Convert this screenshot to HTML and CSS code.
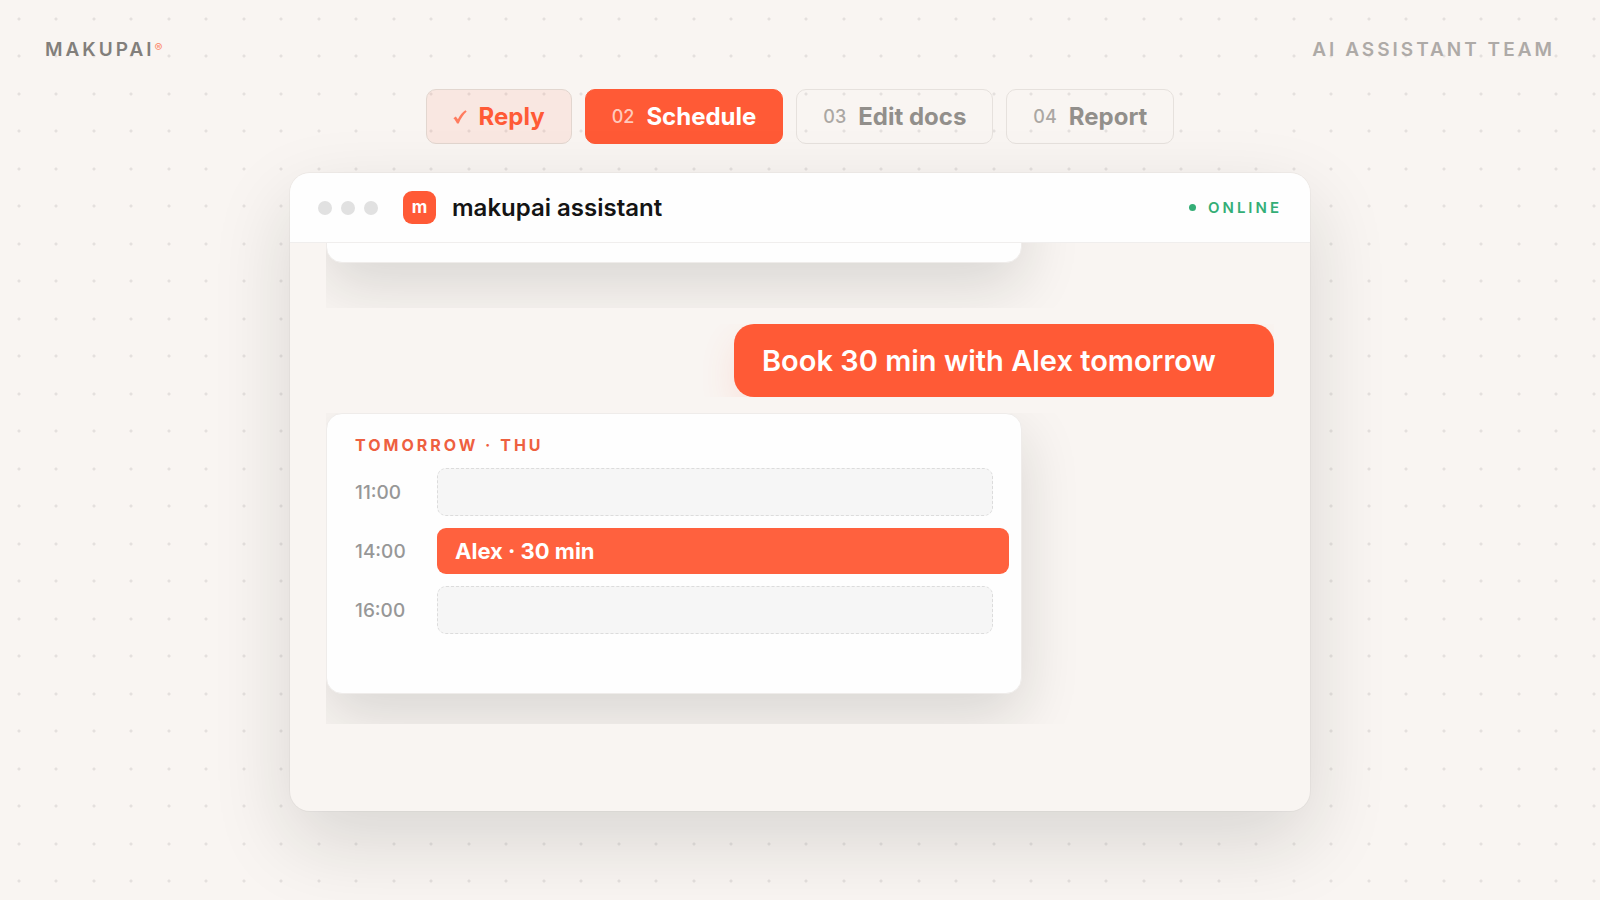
FILE: index.html
```html
<!DOCTYPE html>
<html lang="en">

<head>
	<meta charset="utf-8">
	<meta name="viewport" content="width=device-width, initial-scale=1">
	<title>makupai assistant</title>
	<link rel="stylesheet" href="styles.css">
</head>

<body>
	<header class="topbar">
		<span class="brand">MAKUPAI<sup>®</sup></span>
		<span class="team">AI ASSISTANT TEAM</span>
	</header>

	<nav class="steps">
		<button class="step done"><svg class="check" viewBox="0 0 14 14" aria-hidden="true"><path d="M0.4 8.2 2.8 6.5 4.9 9.2C6.8 5.4 9.3 2.3 12.4 0.2L13.7 1.4C10.2 4.7 7.7 8.4 5.7 13.6H4C3 11.4 1.9 9.6 0.4 8.2Z"/></svg>Reply</button>
		<button class="step active"><span class="num">02</span>Schedule</button>
		<button class="step"><span class="num">03</span>Edit docs</button>
		<button class="step"><span class="num">04</span>Report</button>
	</nav>

	<main class="window">
		<div class="window-bar">
			<div class="lights"><i></i><i></i><i></i></div>
			<span class="logo">m</span>
			<h1>makupai assistant</h1>
			<span class="status">ONLINE</span>
		</div>
		<div class="chat">
			<div class="row previous">
				<div class="card"></div>
			</div>
			<div class="row mine">
				<p class="bubble">Book 30 min with Alex tomorrow</p>
			</div>
			<div class="row reply">
				<section class="card">
					<h2>TOMORROW · THU</h2>
					<div class="slots">
						<time>11:00</time>
						<div class="slot"></div>
						<time>14:00</time>
						<div class="slot booked">Alex · 30 min</div>
						<time>16:00</time>
						<div class="slot"></div>
					</div>
				</section>
			</div>
		</div>
	</main>
</body>

</html>
```

FILE: styles.css
```css
* {
	box-sizing: border-box;
}

body {
	margin: 0;
	min-height: 100vh;
	display: flex;
	flex-direction: column;
	align-items: center;
	overflow: hidden;
	font-family: Inter, sans-serif;
	color: #141414;
	background-color: #f9f5f2;
	/* dot grid, four dots per tile */
	background-image:
		radial-gradient(circle at 19px 19px, #e4e0de 1px, transparent 2px),
		radial-gradient(circle at 56px 19px, #e4e0de 1px, transparent 2px),
		radial-gradient(circle at 19px 56px, #e4e0de 1px, transparent 2px),
		radial-gradient(circle at 56px 56px, #e4e0de 1px, transparent 2px);
	background-size: 75px 75px;
}

.topbar {
	width: 100%;
	padding: 38px 45px 0;
	display: flex;
	justify-content: space-between;
	font-size: 19px;
	line-height: 24px;
	font-weight: 600;
	letter-spacing: 3px;
}

.brand {
	color: #827f7b;
}

.brand sup {
	font-size: 12px;
	line-height: 0;
	vertical-align: 4px;
	color: #fb9479;
}

.team {
	color: #aeaaa7;
}

.steps {
	display: flex;
	gap: 13px;
	margin-top: 27px;
}

.step {
	display: flex;
	align-items: center;
	gap: 12px;
	height: 55px;
	padding: 0 26px;
	border: 1px solid #e6e1dd;
	border-radius: 10px;
	background: transparent;
	font-family: inherit;
	font-size: 24px;
	font-weight: 700;
	color: #928f8b;
	cursor: pointer;
}

.step .num {
	font-size: 18px;
	font-weight: 500;
	color: #aba7a3;
}

.step.done {
	background: rgba(255, 100, 54, 0.09);
	border-color: #e2d6cf;
	color: #ff5a36;
}

.step.active {
	background: #ff5a36;
	border-color: #ff5a36;
	color: #fff;
}

.step.active .num {
	color: #ffcabd;
}

.check {
	width: 14px;
	height: 14px;
	fill: #ff7b5e;
}

.window {
	flex: 1;
	width: calc(100% - 48px);
	max-width: 1020px;
	margin: 29px 0 89px;
	display: flex;
	flex-direction: column;
	overflow: hidden;
	border-radius: 20px;
	background: #f9f5f2;
	box-shadow: 0 0 0 1px rgba(20, 20, 20, 0.03), 0 30px 80px rgba(20, 25, 20, 0.14);
}

.window-bar {
	display: flex;
	align-items: center;
	height: 70px;
	padding: 0 28px;
	border-bottom: 1px solid #f0eeed;
	background: #fefefe;
}

.lights {
	display: flex;
	gap: 9px;
}

.lights i {
	width: 14px;
	height: 14px;
	border-radius: 50%;
	background: #e1e1e1;
}

.logo {
	width: 33px;
	height: 33px;
	margin: 0 16px 0 25px;
	border-radius: 9px;
	background: #ff5a36;
	color: #fff;
	font-size: 17px;
	line-height: 32px;
	font-weight: 700;
	text-align: center;
}

.window-bar h1 {
	margin: 0;
	font-size: 24px;
	font-weight: 600;
}

.status {
	display: flex;
	align-items: center;
	gap: 12px;
	margin-left: auto;
	color: #34ae76;
	font-size: 15px;
	font-weight: 600;
	letter-spacing: 3px;
}

.status::before {
	content: "";
	width: 7px;
	height: 7px;
	border-radius: 50%;
	background: #34ae76;
}

.chat {
	flex: 1;
	display: flex;
	flex-direction: column;
	gap: 16px;
	padding: 0 36px;
}

/* each message clips its own shadow */
.row {
	display: flex;
	overflow: hidden;
}

.card {
	width: 696px;
	max-width: 100%;
	min-height: 281px;
	padding: 20px 28px;
	border: 1px solid #efecea;
	border-radius: 16px;
	background: #fefefe;
	box-shadow: 0 22px 60px rgba(20, 25, 20, 0.14);
}

.previous {
	height: 65px;
	padding-bottom: 45px;
	align-items: flex-end;
}

.reply {
	padding-bottom: 30px;
}

.mine {
	justify-content: flex-end;
}

.bubble {
	width: 540px;
	max-width: 100%;
	margin: 0;
	padding: 18px 28px;
	border-radius: 20px 20px 5px 20px;
	background: #ff5a36;
	box-shadow: 0 15px 36px rgba(255, 90, 54, 0.12);
	color: #fff;
	font-size: 29px;
	line-height: 37px;
	font-weight: 600;
}

.card h2 {
	margin: 0 0 12px;
	color: #ee6040;
	font-size: 16px;
	line-height: 22px;
	font-weight: 700;
	letter-spacing: 3px;
}

.slots {
	display: grid;
	grid-template-columns: 82px 1fr;
	grid-auto-rows: 48px;
	row-gap: 11px;
	align-items: center;
}

.slots time {
	color: #979797;
	font-size: 19px;
	font-weight: 500;
}

.slot {
	height: 48px;
	border: 1px dashed #dcdcdc;
	border-radius: 9px;
	background: #f6f6f6;
}

.slot.booked {
	height: 46px;
	margin-right: -16px;
	padding: 0 18px;
	border: 0;
	background: #ff613e;
	color: #fff;
	font-size: 22px;
	line-height: 46px;
	font-weight: 700;
}
```
